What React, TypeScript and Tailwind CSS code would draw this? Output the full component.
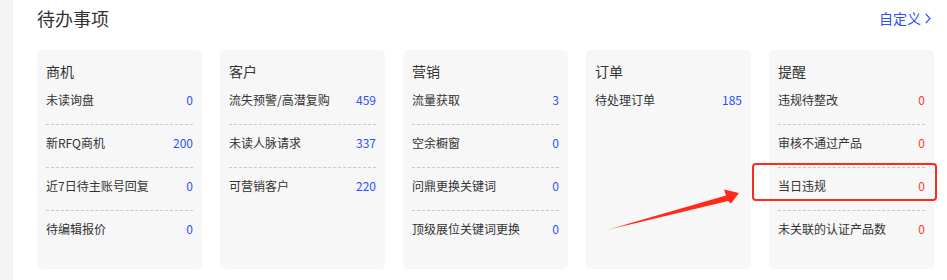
import React from "react";

type Item = { label: string; value: number };
type Group = { title: string; items: Item[]; warn?: boolean };

const groups: Group[] = [
  {
    title: "商机",
    items: [
      { label: "未读询盘", value: 0 },
      { label: "新RFQ商机", value: 200 },
      { label: "近7日待主账号回复", value: 0 },
      { label: "待编辑报价", value: 0 },
    ],
  },
  {
    title: "客户",
    items: [
      { label: "流失预警/高潜复购", value: 459 },
      { label: "未读人脉请求", value: 337 },
      { label: "可营销客户", value: 220 },
    ],
  },
  {
    title: "营销",
    items: [
      { label: "流量获取", value: 3 },
      { label: "空余橱窗", value: 0 },
      { label: "问鼎更换关键词", value: 0 },
      { label: "顶级展位关键词更换", value: 0 },
    ],
  },
  {
    title: "订单",
    items: [{ label: "待处理订单", value: 185 }],
  },
  {
    title: "提醒",
    warn: true,
    items: [
      { label: "违规待整改", value: 0 },
      { label: "审核不通过产品", value: 0 },
      { label: "当日违规", value: 0 },
      { label: "未关联的认证产品数", value: 0 },
    ],
  },
];

function Card({ group }: { group: Group }) {
  return (
    <div className="bg-[#f7f7f7] rounded-[5px] px-[9px] pt-[11px]">
      <div className="text-[14px] leading-[20px] text-[#333]">{group.title}</div>
      <div className="mt-[9px]">
        {group.items.map((item, i) => (
          <div
            key={item.label}
            className={i > 0 ? "border-t border-dashed border-[#c3c6e2] pt-[8px]" : ""}
          >
            <div className="flex items-center justify-between h-[20px] mb-[14px] text-[12px] leading-[20px]">
              <span className="text-[#333]">{item.label}</span>
              <span className={group.warn ? "text-[#ff3b1f]" : "text-[#2b4fff]"}>{item.value}</span>
            </div>
          </div>
        ))}
      </div>
    </div>
  );
}

export default function App() {
  return (
    <div
      className="relative w-[947px] h-[280px] flex bg-white overflow-hidden"
      style={{ fontFamily: '"Noto Sans CJK SC", "Noto Sans", sans-serif' }}
    >
      <div className="w-[13px] bg-[#f4f4f4]" />
      <div className="flex-1 pl-[24px] pr-[13px]">
        <div className="h-[36px] flex items-center justify-between">
          <h1 className="text-[18px] leading-[24px] text-[#333] font-normal">待办事项</h1>
          <a className="flex items-center gap-[4px] text-[14px] leading-[20px] text-[#2b4fff] mr-[3px]">
            自定义
            <svg width="6" height="11" viewBox="0 0 6 11" fill="none">
              <path d="M0.8 0.8 L5 5.5 L0.8 10.2" stroke="#2b4fff" strokeWidth="1.2" />
            </svg>
          </a>
        </div>
        <div className="mt-[14px] grid grid-cols-5 gap-[18px] h-[219px]">
          {groups.map((g) => (
            <Card key={g.title} group={g} />
          ))}
        </div>
      </div>

      {/* annotation overlay */}
      <div className="absolute left-[752px] top-[163px] w-[185px] h-[38px] border-2 border-[#ff2a1a] rounded-[4px]" />
      <svg className="absolute left-0 top-0 pointer-events-none" width="947" height="280">
        <defs>
          <linearGradient id="arw" x1="603" y1="231" x2="738" y2="194" gradientUnits="userSpaceOnUse">
            <stop offset="0" stopColor="#ff2a1a" stopOpacity="0.15" />
            <stop offset="0.2" stopColor="#ff2a1a" />
            <stop offset="1" stopColor="#ff2a1a" />
          </linearGradient>
        </defs>
        <polygon
          points="603,231 726,195.5 724,189.5 739,193 731,203.5 728,201"
          fill="url(#arw)"
        />
      </svg>
    </div>
  );
}
